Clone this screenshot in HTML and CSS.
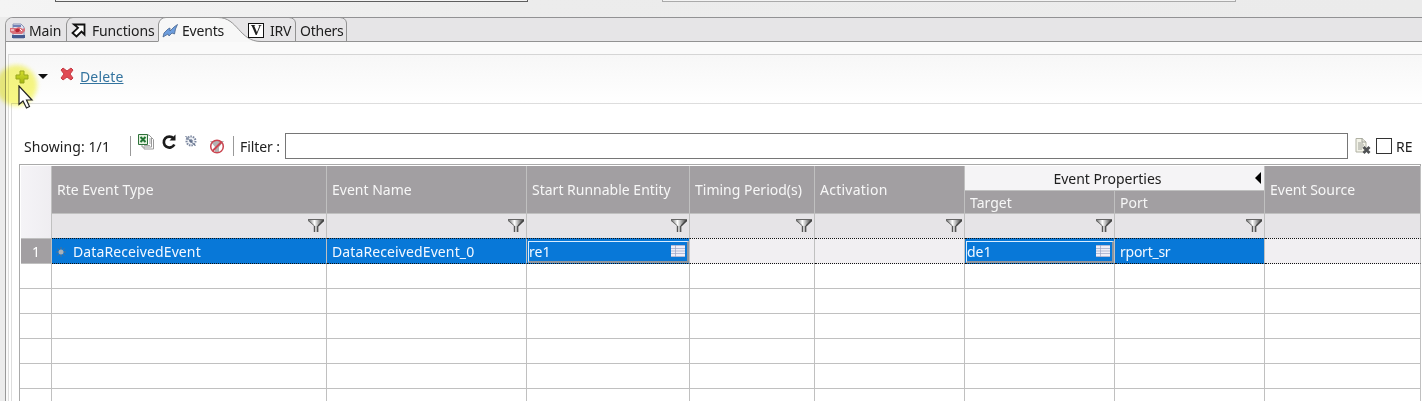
FILE: index.html
```html
<!DOCTYPE html>
<html lang="en"><head><meta charset="utf-8"><title>Events</title><link rel="stylesheet" href="styles.css"></head>
<body>
<svg width="0" height="0" class="defs"><defs>
<linearGradient id="metal"><stop offset="0" stop-color="#666"/><stop offset=".4" stop-color="#fff"/><stop offset="1" stop-color="#333"/></linearGradient>
<linearGradient id="leaf" x2="0" y2="1"><stop offset="0" stop-color="#dbe653"/><stop offset="1" stop-color="#a9bc23"/></linearGradient>
<symbol id="funnel" viewBox="0 0 16 14"><path d="M0 0H16V2L10.500 7V13H6V7L0 2Z" fill="url(#metal)"/><path d="M0 .5H16M.5 1.500 6.500 7" fill="none" stroke="#666"/><path d="M15.500 1.500 10 7" stroke="#444" stroke-width="1.500"/><path d="M6.500 7V13M9.500 7V13" stroke="#555" stroke-width="1.400"/></symbol>
<symbol id="list" viewBox="0 0 14 12"><path d="M0 0H14V12H0Z" fill="#eeeef8"/><path d="M0 .5H14M0 3.500H14M0 6H14M0 8.500H14M0 11.500H14M4.500 0V12" stroke="#9aa3c4" stroke-width=".7"/></symbol>
</defs></svg>
<div class="top"><div class="field one"></div><div class="field two"></div></div>
<div class="panel">
<div class="tabs">
<svg class="outline" width="360" height="25" viewBox="0 0 360 25"><path d="M153.500 25V7Q155 .5 161 .5H213C233 .5 234 24.500 256 24.500V25Z" fill="#f7f7f7"/><path d="M61.500 24V7Q63 .5 68 .5M153.500 24V7Q155 .5 161 .5H213C233 .5 234 24.500 256 24.500M284 .5Q290 1 290.500 6V24M335 .5Q341 1 341.500 6V24" fill="none" stroke="#929292"/></svg>
<div class="tab main"><svg width="16" height="16" viewBox="0 0 16 16"><path d="M3 1H11L14 4V15H3Z" fill="#dfe3f0" stroke="#8b94b5"/><path d="M3 2H11V4H3Z" fill="#7182b5"/><path d="M0 5H6L9 4 13 6 15 5V8L12 11H3L0 9Z" fill="#d9707a"/><path d="M5 7q3-3 5 0-1 3-4 2Z" fill="#b92434"/><path d="M1 7H4M10 6l2 2" stroke="#fff"/><path d="M2 12H15V15H2Z" fill="#44598f"/></svg><span>Main</span></div>
<div class="tab functions"><svg width="15" height="15" viewBox="0 0 15 15"><path d="M3 1.500H13.500V11.500L10.500 8.500 5.500 13.500 1.500 10 7 4.800Z" fill="#fff" stroke="#111" stroke-width="1.800"/></svg><span>Functions</span></div>
<div class="tab events"><svg width="17" height="16" viewBox="0 0 17 16"><path d="M1 14 2 10 6 6 8 5 8 8 12 4 15.500 1.500 13.500 6 12.500 11 10 10 7 13 6 11Z" fill="#6d9ddd" stroke="#46658f" stroke-width=".8"/></svg><span>Events</span></div>
<div class="tab irv"><span class="v">V</span><span>IRV</span></div>
<div class="tab others"><span>Others</span></div>
</div>
<div class="page">
<div class="actions"><svg class="plus" width="14" height="14" viewBox="0 0 14 14"><path d="M5 1H9V5H13V9H9V13H5V9H1V5H5Z" fill="url(#leaf)" stroke="#9dab35"/></svg><i class="down"></i><svg class="x" width="14" height="14" viewBox="0 0 14 14"><path d="M1 3 3 1 7 4 11 1 13 3 10 7 13 11 11 13 7 10 3 13 1 11 4 7Z" fill="#e14b54" stroke="#c53a44"/></svg><a>Delete</a></div>
<div class="content">
<div class="filterbar"><span class="showing">Showing: 1/1</span><i class="sep"></i>
<svg class="excel" width="17" height="17" viewBox="0 0 17 17"><path d="M6 4H13L15.500 6.500V16H6Z" fill="#fff" stroke="#999"/><path d="M4 2H11L13.500 4.500V14H4Z" fill="#fff" stroke="#999"/><path d="M11 6H13M11 8H13M11 10H13M6 12.500H12" stroke="#aaa"/><path d="M.5 1.500H9.500V11.500H.5Z" fill="#e4f1df" stroke="#2e713a"/><path d="M2.500 4 7.500 9M7.500 4 2.500 9" stroke="#217532" stroke-width="2"/></svg>
<svg class="refresh" width="16" height="16" viewBox="0 0 16 16"><path d="M12.500 4.500A5.500 5.500 0 1 0 13.300 10.500" fill="none" stroke="#1b1b1b" stroke-width="2.700"/><path d="M8.500 6.500H14.500V.5Z" fill="#1b1b1b"/></svg>
<svg class="gear" width="12" height="12" viewBox="0 0 12 12"><circle cx="6" cy="6" r="4.500" fill="#edf0f5" stroke="#7c879f" stroke-width="2" stroke-dasharray="1.500 1"/><path d="M.5 1 10.500 11M4 6H8M6 4V8" stroke="#4e5e7c"/></svg>
<svg class="clear" width="16" height="16" viewBox="0 0 16 16"><path d="M1 3H15L10 9V14H6V9Z" fill="#b3b3b3"/><circle cx="8" cy="8.500" r="6.300" fill="none" stroke="#cb4550" stroke-width="1.500"/><path d="M3.500 13 12.500 4" stroke="#cb4550" stroke-width="2"/></svg>
<i class="sep second"></i><span class="filterlabel">Filter :</span><div class="input"></div>
<svg class="doc" width="16" height="16" viewBox="0 0 16 16"><path d="M1 .5H7L11 4V14H1Z" fill="#f3f3e8" stroke="#b0b1a3"/><path d="M7 0V4H11M3 5H8M3 7H9M3 9H8M3 11H7" fill="none" stroke="#a0a29a"/><path d="M8.500 9 14.500 15M14.500 9 8.500 15" stroke="#505254" stroke-width="2.800"/></svg><i class="check"></i><span class="re">RE</span></div>
<div class="table">
<div class="cell corner"></div>
<div class="cell head c2"><span>Rte Event Type</span></div><div class="cell head c3"><span>Event Name</span></div><div class="cell head c4"><span>Start Runnable Entity</span></div><div class="cell head c5"><span>Timing Period(s)</span></div><div class="cell head c6"><span class="wide">Activation</span></div>
<div class="cell group"><span>Event Properties</span><i></i></div><div class="cell head sub c7"><span>Target</span></div><div class="cell head sub c8"><span>Port</span></div><div class="cell head c9"><span>Event Source</span></div>
<div class="cell filter c2"><svg><use href="#funnel"/></svg></div><div class="cell filter"><svg><use href="#funnel"/></svg></div><div class="cell filter"><svg><use href="#funnel"/></svg></div><div class="cell filter"><svg><use href="#funnel"/></svg></div><div class="cell filter"><svg><use href="#funnel"/></svg></div><div class="cell filter"><svg><use href="#funnel"/></svg></div><div class="cell filter"><svg><use href="#funnel"/></svg></div><div class="cell filter"></div>
<div class="cell number">1</div><div class="cell data blue"><svg class="spark" viewBox="0 0 10 10"><path d="M5 0V10M0 5H10M1.500 1.500 8.500 8.500M8.500 1.500 1.500 8.500" stroke="#54708c"/><circle cx="5" cy="5" r="2.500" fill="#a9b1b9"/></svg><span class="name">DataReceivedEvent</span></div><div class="cell data blue"><span class="name">DataReceivedEvent_0</span></div><div class="cell data blue edit"><div><span>re1</span><svg><use href="#list"/></svg></div></div><div class="cell data"></div><div class="cell data"></div><div class="cell data blue edit"><div><span>de1</span><svg><use href="#list"/></svg></div></div><div class="cell data blue"><span class="port">rport_sr</span></div><div class="cell data"></div>
</div>
<div class="blank"><div></div><div></div><div></div><div></div><div></div><div></div><div></div><div></div><div></div></div>
</div></div></div>
<div class="halo"></div>
<svg class="cursor" width="16" height="25" viewBox="0 0 16 25"><path d="M1 1V19.500L5 16 8.500 23 11.500 21.500 8.500 15H14Z" fill="#fff" stroke="#222" stroke-width="1.200"/></svg>
</body></html>
```
FILE: styles.css
```css
*{box-sizing:border-box}
body{margin:0;width:1422px;height:401px;overflow:hidden;position:relative;font:14px/24px "Noto Sans",sans-serif;letter-spacing:-.25px;color:#202020;background:#ececec}
svg{display:block;flex:none}.defs{position:absolute}
span{white-space:nowrap}
.top{height:17px;display:flex;background:linear-gradient(90deg,#f4f4f4,#ececec 35%,#ebebeb)}
.field{height:2px;border:1px solid #5e5e5e;border-top:0;background:#f3f3f3}
.one{margin-left:55px;width:473px}.two{margin-left:134px;width:574px;border-color:#aaa}
.panel{margin-left:5px;height:384px;border-left:1px solid #999;border-top:1px solid #929294;border-top-left-radius:8px;background:#fafafa}
.tabs{height:24px;display:flex;position:relative;background:#e6e5e7;border-bottom:1px solid #929292;border-top-left-radius:7px}
.outline{position:absolute;left:-1px;top:-1px}
.tab{position:relative;display:flex;align-items:center;height:25px;gap:3px}
.main{padding-left:4px;width:61px;letter-spacing:-.1px}.functions{padding-left:4px;width:92px;gap:6px;letter-spacing:-.15px}.events{padding-left:3px;width:89px;gap:3px;letter-spacing:-.2px}.irv{width:48px;gap:6px}.others{padding-left:4px}
.v{font:bold 15px/13px "Liberation Serif",serif;border:1px solid #111;width:16px;height:15px;text-align:center;background:#fff}
.page{margin-left:2px;margin-top:12px;border-left:1px solid #ddd;border-top:1px solid #d5d5d5;height:347px;background:linear-gradient(#f7f7f7,#fff 50px)}
.actions{height:48px;display:flex;align-items:center;padding:0 0 5px 6px}
.down{width:0;border:5px solid transparent;border-top-color:#111;border-bottom:0;margin-left:9px}.x{margin:-5px 0 0 12px}.actions a{margin-left:6px;color:#34749f;text-decoration:underline;letter-spacing:.15px}
.content{margin-left:2px;border-left:1px solid #ddd;border-top:1px solid #ddd;height:299px;padding-left:7px;background:#fff}
.filterbar{height:60px;padding:29px 0 5px 5px;display:flex;align-items:center}
.showing{width:106px;letter-spacing:.08px;padding-top:1px}.sep{width:1px;height:20px;background:#999}.excel{margin:-9px 0 0 7px}.refresh{margin:-8px 0 0 6px}.gear{margin:-10px 0 0 8px}.clear{margin:0 0 0 12px}.second{margin-left:8px}.filterlabel{margin-left:6px;width:45px;padding-top:1px;letter-spacing:-.1px}.input{width:1063px;height:26px;border:1px solid #767676}.doc{margin-left:7px}.check{width:16px;height:16px;border:1px solid #333;margin-left:5px}.re{margin-left:4px;padding-top:1px;letter-spacing:0}
.table{letter-spacing:0;width:1402px;border:1px solid #aaa;border-bottom:0;padding:1px 0 0 1px;display:grid;grid-template-columns:31px 275px 200px 163px 125px 150px 150px 150px 156px;grid-template-rows:25px 23px 25px 25px}
.cell{border-right:1px solid #c0c0c0;border-bottom:1px solid #c0c0c0;min-width:0;display:flex;align-items:center}
.corner{grid-row:1/4;background:linear-gradient(90deg,#f5f4f7,#efedf1)}
.head{grid-row:1/3;background:#a29fa2;color:#f7f7f7;padding-left:5px}
.wide{letter-spacing:.25px}
.head.sub{grid-row:2;padding-top:2px}.c7{grid-column:7}.c8{grid-column:8}.c9{grid-column:9}
.group{grid-column:7/9;grid-row:1;background:#f5f4f6;position:relative;justify-content:center;padding:2px 14px 0 0}
.group i{position:absolute;right:3px;top:6px;border:6px solid transparent;border-right-color:#000;border-left:0}
.filter{background:#e6e4e7;justify-content:flex-end;padding-right:2px}.filter.c2{grid-column:2}.filter svg{width:16px;height:14px}
.number{background:#a29fa2;color:#fff;justify-content:center;padding-top:2px}
.data{background:#f1eff2;border-top:1px dotted #111;border-bottom:1px dotted #111;height:26px;margin-top:-1px;padding:2px 0 0 5px}
.blue{background:#0878d8;color:#f3f8ff}
.name{letter-spacing:.11px}.port{letter-spacing:-.25px}
.spark{width:10px;height:10px;margin:0 7px 0 -1px}
.edit{padding:1px 0 0 1px}.edit div{width:100%;height:22px;border:1px solid #d8edff;border-right:2px solid #8f969f;border-bottom:2px solid #8f969f;display:flex;align-items:center;justify-content:space-between}.edit span{padding-top:2px}.edit svg{width:14px;height:12px;margin-right:2px}
.blank{width:1402px;height:139px;border-left:1px solid #aaa;border-right:1px solid #aaa;padding-left:1px;display:grid;grid-template-columns:31px 275px 200px 163px 125px 150px 150px 150px 156px;background:repeating-linear-gradient(#fff 0 24px,#c0c0c0 24px 25px)}
.blank div{border-right:1px solid #c0c0c0}
.halo{position:absolute;left:-4px;top:65px;width:41px;height:41px;border-radius:50%;background:#f5f550;mix-blend-mode:multiply;filter:blur(2px);opacity:.7}
.cursor{position:absolute;left:18px;top:85px}
```
